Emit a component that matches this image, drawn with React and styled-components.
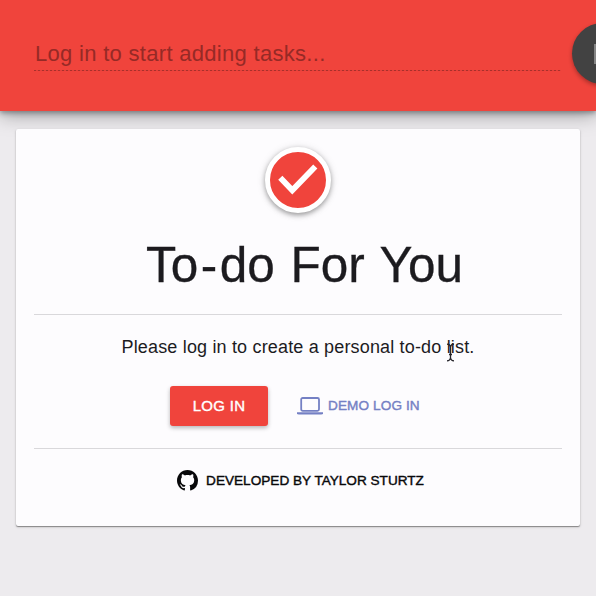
import React from "react";
import styled, { createGlobalStyle } from "styled-components";

const GlobalStyle = createGlobalStyle`
  * { box-sizing: border-box; }
  html, body { margin: 0; background: #edebee; overflow: hidden; }
  body { font-family: "Liberation Sans", Arial, sans-serif; color: #1c1b1f; }
`;

const Page = styled.div`
  height: 596px;
  display: flex;
  flex-direction: column;
  overflow: hidden;
`;

const Header = styled.header`
  height: 111px;
  flex: none;
  display: flex;
  align-items: flex-start;
  padding: 22px 0 0 34px;
  gap: 11px;
  background: #f0443c;
  box-shadow: 0 2px 5px rgba(30, 40, 45, 0.4), 0 4px 18px rgba(0, 0, 0, 0.34);
`;

const TaskInput = styled.input`
  width: 527px;
  height: 49px;
  flex: none;
  border: 0;
  padding: 14px 1px 0;
  background: repeating-linear-gradient(90deg, #a8302b 0 2px, #e2403a 2px 4px) bottom / 100% 1px no-repeat;
  font: 22px "Liberation Sans", Arial, sans-serif;
  letter-spacing: 0.3px;
  outline: none;
  &::placeholder { color: #962a26; opacity: 1; }
`;

const AddButton = styled.button`
  width: 61px;
  height: 61px;
  margin-top: 1px;
  flex: none;
  display: grid;
  place-items: center;
  padding: 0;
  border: 0;
  border-radius: 50%;
  background: #424242;
  color: #858585;
  box-shadow: 0 2px 4px rgba(0, 0, 0, 0.32);
`;

const Card = styled.main`
  margin: 18px 16px 0;
  height: 397px;
  padding: 0 18px;
  flex: none;
  display: flex;
  flex-direction: column;
  align-items: center;
  background: #fdfcfe;
  border-radius: 2px;
  box-shadow: 0 1px 1px rgba(0, 0, 0, 0.36), 0 1px 3px rgba(0, 0, 0, 0.16);
`;

const Logo = styled.div`
  width: 66px;
  height: 66px;
  margin-top: 18px;
  flex: none;
  border: 5px solid #fff;
  border-radius: 50%;
  background: #f0443c;
  box-shadow: 0 2px 5px rgba(0, 0, 0, 0.34), 0 1px 10px rgba(0, 0, 0, 0.12);
  svg { display: block; }
`;

const Title = styled.h1`
  margin: 21px 0 0 13px;
  height: 61px;
  font-size: 49.5px;
  line-height: 61px;
  font-weight: 400;
  word-spacing: 2px;
  -webkit-text-stroke: 0.3px currentColor;
  white-space: nowrap;
`;

const Hyphen = styled.span`
  padding: 0 2.5px;
`;

const Divider = styled.hr`
  width: 100%;
  height: 1px;
  flex: none;
  border: 0;
  margin: ${({ $top }) => $top}px 0 0;
  background: #d9d8db;
`;

const Message = styled.p`
  position: relative;
  margin: 20px 0 0;
  height: 26px;
  font-size: 18px;
  line-height: 25px;
  letter-spacing: 0.17px;
  white-space: nowrap;
`;

const TextCursor = styled.svg`
  position: absolute;
  left: 325px;
  top: 8px;
`;

const Actions = styled.div`
  width: 100%;
  height: 40px;
  margin-top: 24.5px;
  padding-left: 136px;
  display: flex;
  gap: 29px;
`;

const Label = styled.span`
  font-size: ${({ $size }) => $size}px;
  letter-spacing: ${({ $spacing }) => $spacing}px;
  -webkit-text-stroke: 0.4px currentColor;
  white-space: nowrap;
`;

const LoginButton = styled.button`
  width: 98px;
  height: 40px;
  padding: 0;
  border: 0;
  border-radius: 3px;
  background: #f0443c;
  color: #fff;
  font-family: inherit;
  box-shadow: 0 2px 4px rgba(0, 0, 0, 0.28);
`;

const DemoButton = styled.button`
  display: flex;
  align-items: center;
  gap: 5px;
  padding: 0;
  border: 0;
  background: transparent;
  color: #7480c4;
  font-family: inherit;
`;

const Credit = styled.footer`
  margin-top: 20.5px;
  height: 22px;
  display: flex;
  align-items: center;
  gap: 8px;
  color: #08080a;
  margin-left: 5px;
`;

export default function App() {
  return (
    <>
      <GlobalStyle />
      <Page>
        <Header>
          <TaskInput placeholder="Log in to start adding tasks..." readOnly />
          <AddButton aria-label="Add task">
            <svg width="18" height="20" viewBox="0 0 18 20">
              <path fill="currentColor" d="M0 0h3v20H0zM3 0h15v3H3z" />
            </svg>
          </AddButton>
        </Header>
        <Card>
          <Logo>
            <svg width="56" height="56" viewBox="0 0 56 56">
              <path d="M10.3 25.8 22.3 38.3 45.3 14.5" fill="none" stroke="#fff" strokeWidth="5.8" />
            </svg>
          </Logo>
          <Title>To<Hyphen>-</Hyphen>do For You</Title>
          <Divider $top={19} />
          <Message>
            Please log in to create a personal to-do list.
            <TextCursor width="9" height="19" viewBox="0 0 9 19" fill="none" stroke="#242329" strokeWidth="1.3">
              <path d="M1 1.2Q4 1.2 4.5 4Q5 1.2 8 1.2M4.5 4v11M1 17.8Q4 17.8 4.5 15Q5 17.8 8 17.8M3 11.5h3" />
            </TextCursor>
          </Message>
          <Actions>
            <LoginButton><Label $size={15} $spacing={0.3}>LOG IN</Label></LoginButton>
            <DemoButton>
              <svg width="26" height="18" viewBox="0 0 26 18">
                <rect x="4.2" y="1" width="17.8" height="12.8" rx="1.5" fill="none" stroke="currentColor" strokeWidth="1.8" />
                <path fill="currentColor" d="M0 15.2h26v1q0 1.3-2 1.3H2q-2 0-2-1.3z" />
              </svg>
              <Label $size={13.6} $spacing={0.1}>DEMO LOG IN</Label>
            </DemoButton>
          </Actions>
          <Divider $top={22.5} />
          <Credit>
            <svg width="21" height="21" viewBox="0 0 16 16" fill="currentColor">
              <path d="M8 0C3.58 0 0 3.58 0 8c0 3.54 2.29 6.53 5.47 7.59.4.07.55-.17.55-.38 0-.19-.01-.82-.01-1.49-2.01.37-2.53-.49-2.69-.94-.09-.23-.48-.94-.82-1.13-.28-.15-.68-.52-.01-.53.63-.01 1.08.58 1.23.82.72 1.21 1.87.87 2.33.66.07-.52.28-.87.51-1.07-1.78-.2-3.64-.89-3.64-3.95 0-.87.31-1.59.82-2.15-.08-.2-.36-1.02.08-2.12 0 0 .67-.21 2.2.82.64-.18 1.32-.27 2-.27s1.36.09 2 .27c1.53-1.04 2.2-.82 2.2-.82.44 1.1.16 1.92.08 2.12.51.56.82 1.27.82 2.15 0 3.07-1.87 3.75-3.65 3.95.29.25.54.73.54 1.48 0 1.07-.01 1.93-.01 2.2 0 .21.15.46.55.38A8.01 8.01 0 0 0 16 8c0-4.42-3.58-8-8-8z" />
            </svg>
            <Label $size={13.6} $spacing={0}>DEVELOPED BY TAYLOR STURTZ</Label>
          </Credit>
        </Card>
      </Page>
    </>
  );
}
